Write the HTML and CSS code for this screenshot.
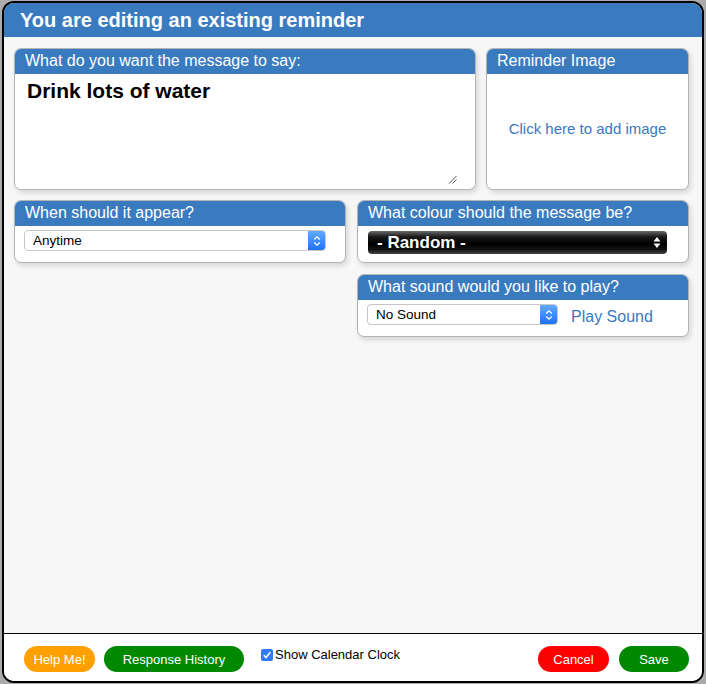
FILE: index.html
```html
<!DOCTYPE html>
<html lang="en">
<head>
<meta charset="utf-8">
<title>Edit reminder</title>
<link rel="stylesheet" href="styles.css">
</head>
<body>
<div class="dialog">
  <div class="titlebar">You are editing an existing reminder</div>
  <div class="content">
    <div class="row-top">
      <section class="panel panel-msg">
        <div class="panel-head">What do you want the message to say:</div>
        <div class="panel-body msg-body">
          <div class="msg-text">Drink lots of water</div>
          <svg class="grip" width="9" height="9" viewBox="0 0 9 9"><path d="M1 8.5 L8.5 1 M4.5 8.5 L8.5 4.5" stroke="#555" stroke-width="1" fill="none"/></svg>
        </div>
      </section>
      <section class="panel panel-img">
        <div class="panel-head">Reminder Image</div>
        <div class="panel-body img-body"><a class="link img-link">Click here to add image</a></div>
      </section>
    </div>
    <div class="row-bottom">
      <div class="col">
        <section class="panel">
          <div class="panel-head">When should it appear?</div>
          <div class="panel-body ctl-body">
            <div class="select select-when"><span class="select-text">Anytime</span><span class="select-btn"><svg width="8" height="12" viewBox="0 0 8 12"><path d="M1.2 4.5 L4 1.8 L6.8 4.5 M1.2 7.5 L4 10.2 L6.8 7.5" stroke="#fff" stroke-width="1.3" fill="none"/></svg></span></div>
          </div>
        </section>
      </div>
      <div class="col">
        <section class="panel">
          <div class="panel-head">What colour should the message be?</div>
          <div class="panel-body ctl-body">
            <div class="select-dark"><span class="dark-text">- Random -</span><svg width="8" height="13" viewBox="0 0 8 13"><path d="M4 1 L7.5 5.5 L0.5 5.5 Z M4 12 L7.5 7.5 L0.5 7.5 Z" fill="#fff"/></svg></div>
          </div>
        </section>
        <section class="panel">
          <div class="panel-head">What sound would you like to play?</div>
          <div class="panel-body ctl-body sound-body">
            <div class="select select-sound"><span class="select-text">No Sound</span><span class="select-btn"><svg width="8" height="12" viewBox="0 0 8 12"><path d="M1.2 4.5 L4 1.8 L6.8 4.5 M1.2 7.5 L4 10.2 L6.8 7.5" stroke="#fff" stroke-width="1.3" fill="none"/></svg></span></div>
            <a class="link play-link">Play Sound</a>
          </div>
        </section>
      </div>
    </div>
  </div>
  <div class="footer">
    <button class="btn btn-help">Help Me!</button>
    <button class="btn btn-history">Response History</button>
    <label class="check"><span class="checkbox"><svg width="12" height="12" viewBox="0 0 12 12"><path d="M2.8 6.2 L5 8.5 L9.3 3.3" stroke="#fff" stroke-width="1.6" fill="none"/></svg></span>Show Calendar Clock</label>
    <span class="spacer"></span>
    <button class="btn btn-cancel">Cancel</button>
    <button class="btn btn-save">Save</button>
  </div>
</div>
</body>
</html>
```

FILE: styles.css
```css
* { box-sizing: border-box; }
html, body { margin: 0; padding: 0; }
body {
  background: #ababab;
  font-family: "Liberation Sans", Arial, Helvetica, sans-serif;
  width: 706px;
  height: 684px;
  overflow: hidden;
}
.dialog {
  margin: 1px 0 0 2px;
  width: 702px;
  height: 682px;
  border: 2px solid #000;
  border-radius: 12px;
  overflow: hidden;
  display: flex;
  flex-direction: column;
  background: #f7f7f7;
}
.titlebar {
  height: 34px;
  flex: none;
  background: #3a7bc0;
  color: #fff;
  font-weight: bold;
  font-size: 20px;
  line-height: 34px;
  padding-left: 16px;
}
.content {
  flex: 1;
  padding: 11px 12px 0 10px;
  display: flex;
  flex-direction: column;
  gap: 10px;
}
.row-top {
  display: flex;
  gap: 10px;
}
.row-bottom {
  display: grid;
  grid-template-columns: 332px 332px;
  gap: 11px;
  align-items: start;
}
.col {
  display: flex;
  flex-direction: column;
  gap: 11px;
}
.panel {
  background: #fff;
  border: 1px solid #b4b4b4;
  border-radius: 7px;
  box-shadow: 2px 3px 5px rgba(0,0,0,0.13);
  overflow: hidden;
}
.panel-head {
  background: #3a7bc0;
  color: #fff;
  font-size: 16px;
  height: 25px;
  line-height: 24px;
  padding-left: 10px;
  white-space: nowrap;
}
.panel-msg { width: 462px; height: 142px; display: flex; flex-direction: column; }
.panel-img { width: 203px; height: 142px; display: flex; flex-direction: column; }
.panel-body { flex: 1; }
.msg-body {
  position: relative;
  padding: 5px 12px;
}
.msg-text {
  font-size: 21px;
  font-weight: bold;
  line-height: 24px;
  color: #000;
}
.grip {
  position: absolute;
  right: 18px;
  bottom: 5px;
}
.img-body {
  display: flex;
  align-items: center;
  justify-content: center;
  padding-bottom: 7px;
}
.link {
  color: #3a78c2;
  cursor: pointer;
}
.img-link { font-size: 15px; }
.ctl-body {
  height: 36px;
  padding: 4px 0 0 9px;
}
.select {
  height: 21px;
  border: 1px solid #c6c6c6;
  border-radius: 4px;
  background: #fff;
  display: flex;
  align-items: center;
  font-size: 13.5px;
  color: #000;
  overflow: hidden;
}
.select-when { width: 302px; }
.select-sound { width: 191px; }
.select-text { flex: 1; padding-left: 8px; }
.select-btn {
  width: 18px;
  height: 21px;
  margin: -1px -1px -1px 0;
  background: linear-gradient(#63adff, #1b70f4);
  border-radius: 0 4px 4px 0;
  display: flex;
  align-items: center;
  justify-content: center;
}
.select-dark {
  width: 299px;
  height: 23px;
  margin: 1px 0 0 1px;
  border-radius: 4px;
  background: linear-gradient(#6a6a6a 0%, #1a1a1a 25%, #000 55%, #111 80%, #444 100%);
  display: flex;
  align-items: center;
  padding: 0 6px 0 9px;
}
.dark-text {
  flex: 1;
  color: #fff;
  font-weight: bold;
  font-size: 17px;
  font-family: "Liberation Sans", Arial, sans-serif;
}
.sound-body {
  display: flex;
  align-items: flex-start;
  gap: 13px;
}
.play-link {
  font-size: 16px;
  line-height: 21px;
  margin-top: 2px;
}
.footer {
  height: 48px;
  flex: none;
  border-top: 1px solid #000;
  background: #fff;
  display: flex;
  align-items: flex-start;
  padding: 12px 13px 0 20px;
}
.btn {
  height: 26px;
  border: none;
  border-radius: 13px;
  color: #fff;
  font-family: "Liberation Sans", Arial, sans-serif;
  font-size: 13px;
  padding: 0;
  cursor: pointer;
}
.btn-help { width: 71px; background: #ff9f00; }
.btn-history { width: 140px; background: #008800; margin-left: 9px; }
.btn-cancel { width: 71px; background: #ff0000; }
.btn-save { width: 70px; background: #008800; margin-left: 10px; }
.check {
  margin: 1px 0 0 17px;
  display: flex;
  align-items: flex-start;
  font-size: 13px;
  line-height: 15px;
  color: #000;
}
.checkbox {
  width: 12px;
  height: 12px;
  margin: 2px 2px 0 0;
  border-radius: 2px;
  background: #2f7cf6;
  display: flex;
}
.spacer { flex: 1; }
```
